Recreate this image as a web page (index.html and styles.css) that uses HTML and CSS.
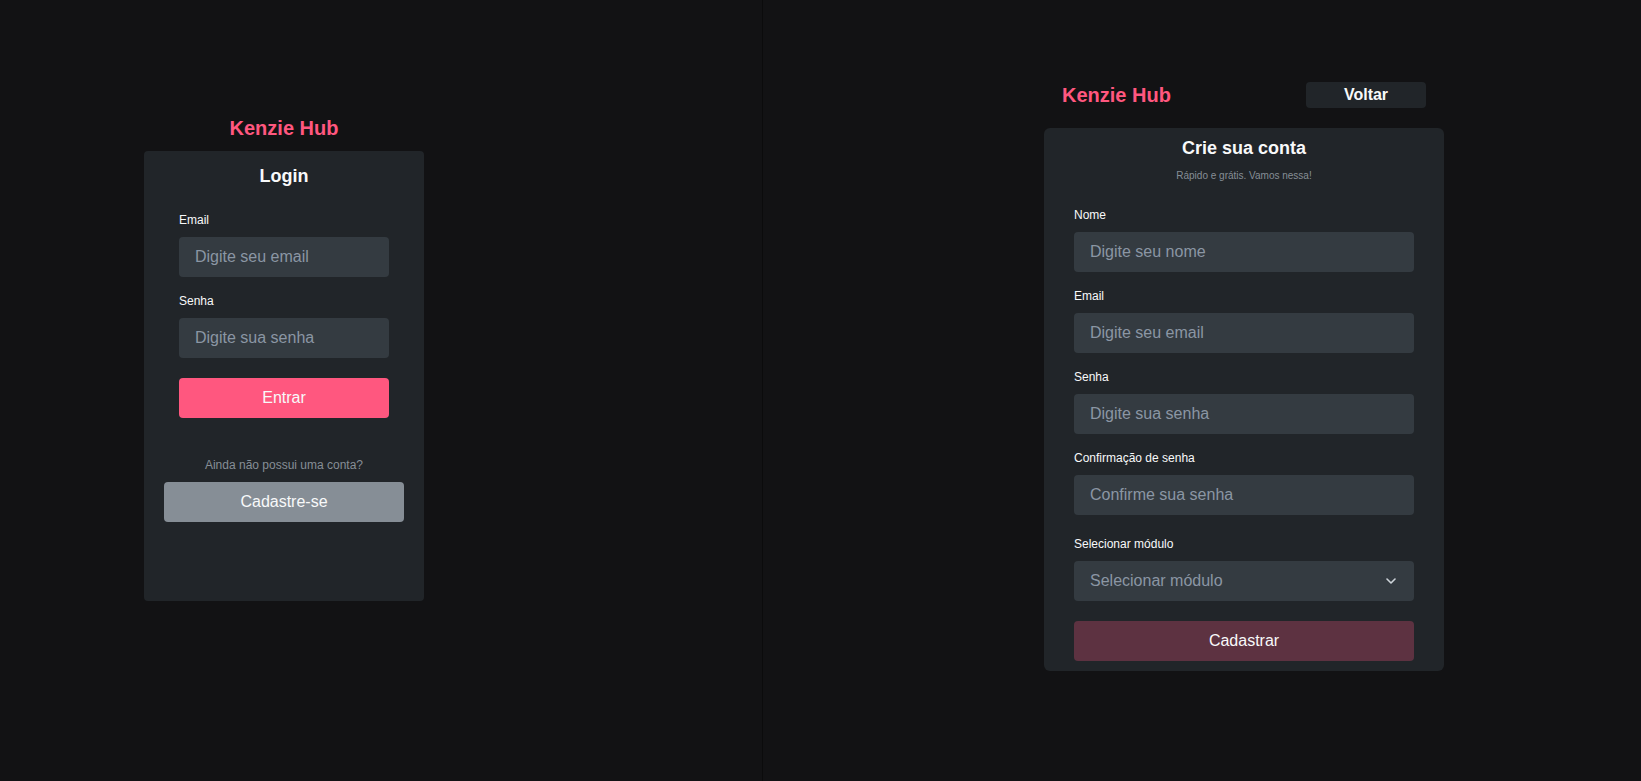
FILE: index.html
```html
<!DOCTYPE html>
<html lang="pt-BR">
<head>
<meta charset="utf-8">
<title>Kenzie Hub</title>
<link rel="stylesheet" href="styles.css">
</head>
<body>
  <section class="panel panel-left">
    <div class="login">
      <h1 class="logo">Kenzie Hub</h1>
      <div class="card card-login">
        <h2 class="card-title">Login</h2>
        <form class="form form-login">
          <div class="field">
            <label class="label">Email</label>
            <input class="input" type="text" placeholder="Digite seu email">
          </div>
          <div class="field">
            <label class="label">Senha</label>
            <input class="input" type="password" placeholder="Digite sua senha">
          </div>
          <button type="button" class="btn btn-primary">Entrar</button>
        </form>
        <p class="hint">Ainda não possui uma conta?</p>
        <button type="button" class="btn btn-gray">Cadastre-se</button>
      </div>
    </div>
  </section>

  <section class="panel panel-right">
    <div class="register">
      <header class="reg-header">
        <h1 class="logo">Kenzie Hub</h1>
        <button type="button" class="btn-back">Voltar</button>
      </header>
      <div class="card card-register">
        <h2 class="card-title">Crie sua conta</h2>
        <p class="subtitle">Rápido e grátis. Vamos nessa!</p>
        <form class="form form-register">
          <div class="field">
            <label class="label">Nome</label>
            <input class="input" type="text" placeholder="Digite seu nome">
          </div>
          <div class="field">
            <label class="label">Email</label>
            <input class="input" type="text" placeholder="Digite seu email">
          </div>
          <div class="field">
            <label class="label">Senha</label>
            <input class="input" type="password" placeholder="Digite sua senha">
          </div>
          <div class="field">
            <label class="label">Confirmação de senha</label>
            <input class="input" type="password" placeholder="Confirme sua senha">
          </div>
          <div class="field field-select">
            <label class="label">Selecionar módulo</label>
            <div class="select">
              <span>Selecionar módulo</span>
              <svg class="chevron" width="10" height="6" viewBox="0 0 10 6" aria-hidden="true"><path d="M1 1l4 4 4-4" fill="none" stroke="#CED4DA" stroke-width="1.6" stroke-linecap="round" stroke-linejoin="round"/></svg>
            </div>
          </div>
          <button type="button" class="btn btn-disabled">Cadastrar</button>
        </form>
      </div>
    </div>
  </section>
</body>
</html>
```

FILE: styles.css
```css
* { box-sizing: border-box; }

html, body {
  margin: 0;
  height: 100%;
}

body {
  display: flex;
  background: #121214;
  font-family: "Liberation Sans", Arial, sans-serif;
  color: #F8F9FA;
  overflow: hidden;
}

.panel {
  height: 781px;
}

.panel-left {
  width: 763px;
  padding: 117px 0 0 144px;
  border-right: 1px solid #0b0b0c;
}

.panel-right {
  flex: 1;
  padding: 82px 0 0 281px;
}

.login {
  width: 280px;
  display: flex;
  flex-direction: column;
  align-items: center;
}

.logo {
  margin: 0;
  font-size: 20px;
  line-height: 23px;
  font-weight: 700;
  color: #FF577F;
}

.card {
  background: #212529;
  width: 100%;
}

.card-login {
  margin-top: 11px;
  height: 450px;
  border-radius: 4px;
  padding: 15px 20px 0;
}

.card-title {
  margin: 0;
  font-size: 18px;
  line-height: 21px;
  font-weight: 700;
  text-align: center;
  color: #F8F9FA;
}

.form {
  display: flex;
  flex-direction: column;
}

.form-login {
  margin-top: 26px;
  padding: 0 15px;
}

.field {
  display: flex;
  flex-direction: column;
}

.field + .field {
  margin-top: 17px;
}

.field-select {
  margin-top: 22px !important;
}

.label {
  font-size: 12px;
  line-height: 14px;
  color: #F8F9FA;
  margin-bottom: 10px;
}

.input,
.select {
  width: 100%;
  height: 40px;
  border: none;
  outline: none;
  border-radius: 4px;
  background: #343B41;
  padding: 0 16px;
  font-family: inherit;
  font-size: 16px;
  color: #8B96A4;
}

.input::placeholder {
  color: #8B96A4;
  opacity: 1;
}

.select {
  display: flex;
  align-items: center;
  justify-content: space-between;
}

.chevron {
  display: block;
  margin-right: 2px;
}

.btn {
  width: 100%;
  height: 40px;
  border: none;
  border-radius: 4px;
  font-family: inherit;
  font-size: 16px;
  color: #F8F9FA;
  cursor: pointer;
}

.btn-primary {
  margin-top: 20px;
  background: #FF577F;
}

.hint {
  margin: 40px 0 0;
  font-size: 12px;
  line-height: 14px;
  text-align: center;
  color: #868E96;
}

.btn-gray {
  margin-top: 10px;
  background: #868E96;
}

.register {
  width: 400px;
}

.reg-header {
  display: flex;
  align-items: center;
  justify-content: space-between;
  height: 26px;
  padding: 0 18px;
}

.btn-back {
  width: 120px;
  height: 26px;
  border: none;
  border-radius: 4px;
  background: #212529;
  font-family: inherit;
  font-size: 16px;
  font-weight: 700;
  color: #F8F9FA;
}

.card-register {
  margin-top: 20px;
  border-radius: 6px;
  padding: 10px 30px 10px;
}

.subtitle {
  margin: 11px 0 0;
  font-size: 10px;
  line-height: 12px;
  text-align: center;
  color: #868E96;
}

.form-register {
  margin-top: 26px;
}

.btn-disabled {
  margin-top: 20px;
  background: #5D3241;
}
```
